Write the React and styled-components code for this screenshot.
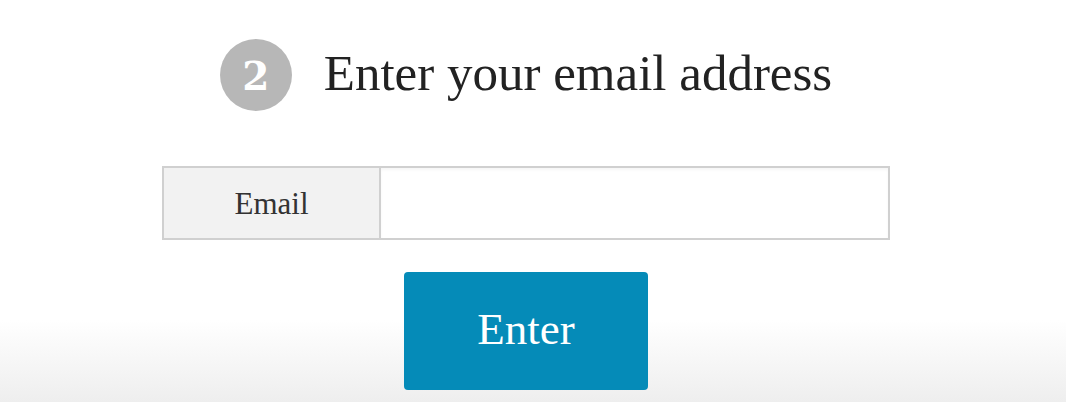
import React, { useState } from 'react';
import styled, { createGlobalStyle } from 'styled-components';

const GlobalStyle = createGlobalStyle`
    html, body {
        margin: 0;
        padding: 0;
    }
    body {
        min-height: 402px;
        background: linear-gradient(to bottom, #ffffff 0, #ffffff 320px, #eeeeee 402px);
        font-family: 'Liberation Serif', 'Times New Roman', serif;
    }
`;

const App = () => {
    const [email, setEmail] = useState('');

    return (
        <Page>
            <GlobalStyle />
            <StepHeading>
                <StepBadge>2</StepBadge>
                <h1>Enter your email address</h1>
            </StepHeading>
            <FieldRow>
                <FieldLabel htmlFor='email'>Email</FieldLabel>
                <FieldInput
                    id='email'
                    type='email'
                    value={email}
                    onChange={e => setEmail(e.target.value)}
                />
            </FieldRow>
            <SubmitButton type='button'>Enter</SubmitButton>
        </Page>
    );
};

const Page = styled.div`
    display: flex;
    flex-direction: column;
    align-items: center;
    padding: 39px 14px 0 0;
`;

const StepHeading = styled.div`
    display: flex;
    align-items: center;
    gap: 32px;
    h1 {
        margin: 0;
        font-weight: normal;
        font-size: 51px;
        line-height: 1;
        color: #222222;
        padding-bottom: 4px;
    }
`;

const StepBadge = styled.span`
    display: flex;
    align-items: center;
    justify-content: center;
    width: 72px;
    height: 72px;
    border-radius: 50%;
    background: #b7b7b7;
    color: #ffffff;
    font-family: 'DejaVu Serif', Georgia, serif;
    font-weight: bold;
    font-size: 39px;
    line-height: 1;
    padding-top: 3px;
    box-sizing: border-box;
`;

const FieldRow = styled.div`
    display: flex;
    width: 728px;
    height: 74px;
    margin-top: 55px;
    box-sizing: border-box;
    border: 2px solid #d0d0d0;
    background: #ffffff;
`;

const FieldLabel = styled.label`
    display: flex;
    align-items: center;
    justify-content: center;
    width: 217px;
    background: #f2f2f2;
    border-right: 2px solid #d0d0d0;
    font-size: 31px;
    color: #333333;
    padding-top: 2px;
    box-sizing: border-box;
`;

const FieldInput = styled.input`
    flex: 1;
    border: none;
    outline: none;
    background: #ffffff;
    box-shadow: inset 0 2px 3px rgba(0, 0, 0, 0.04);
    font-family: inherit;
    font-size: 24px;
    padding: 0 16px;
`;

const SubmitButton = styled.button`
    margin-top: 32px;
    width: 244px;
    height: 118px;
    border: none;
    border-radius: 4px;
    background: #058bb8;
    color: #ffffff;
    font-family: 'Liberation Serif', 'Times New Roman', serif;
    font-size: 45px;
    padding-bottom: 6px;
    cursor: pointer;
`;

export default App;
